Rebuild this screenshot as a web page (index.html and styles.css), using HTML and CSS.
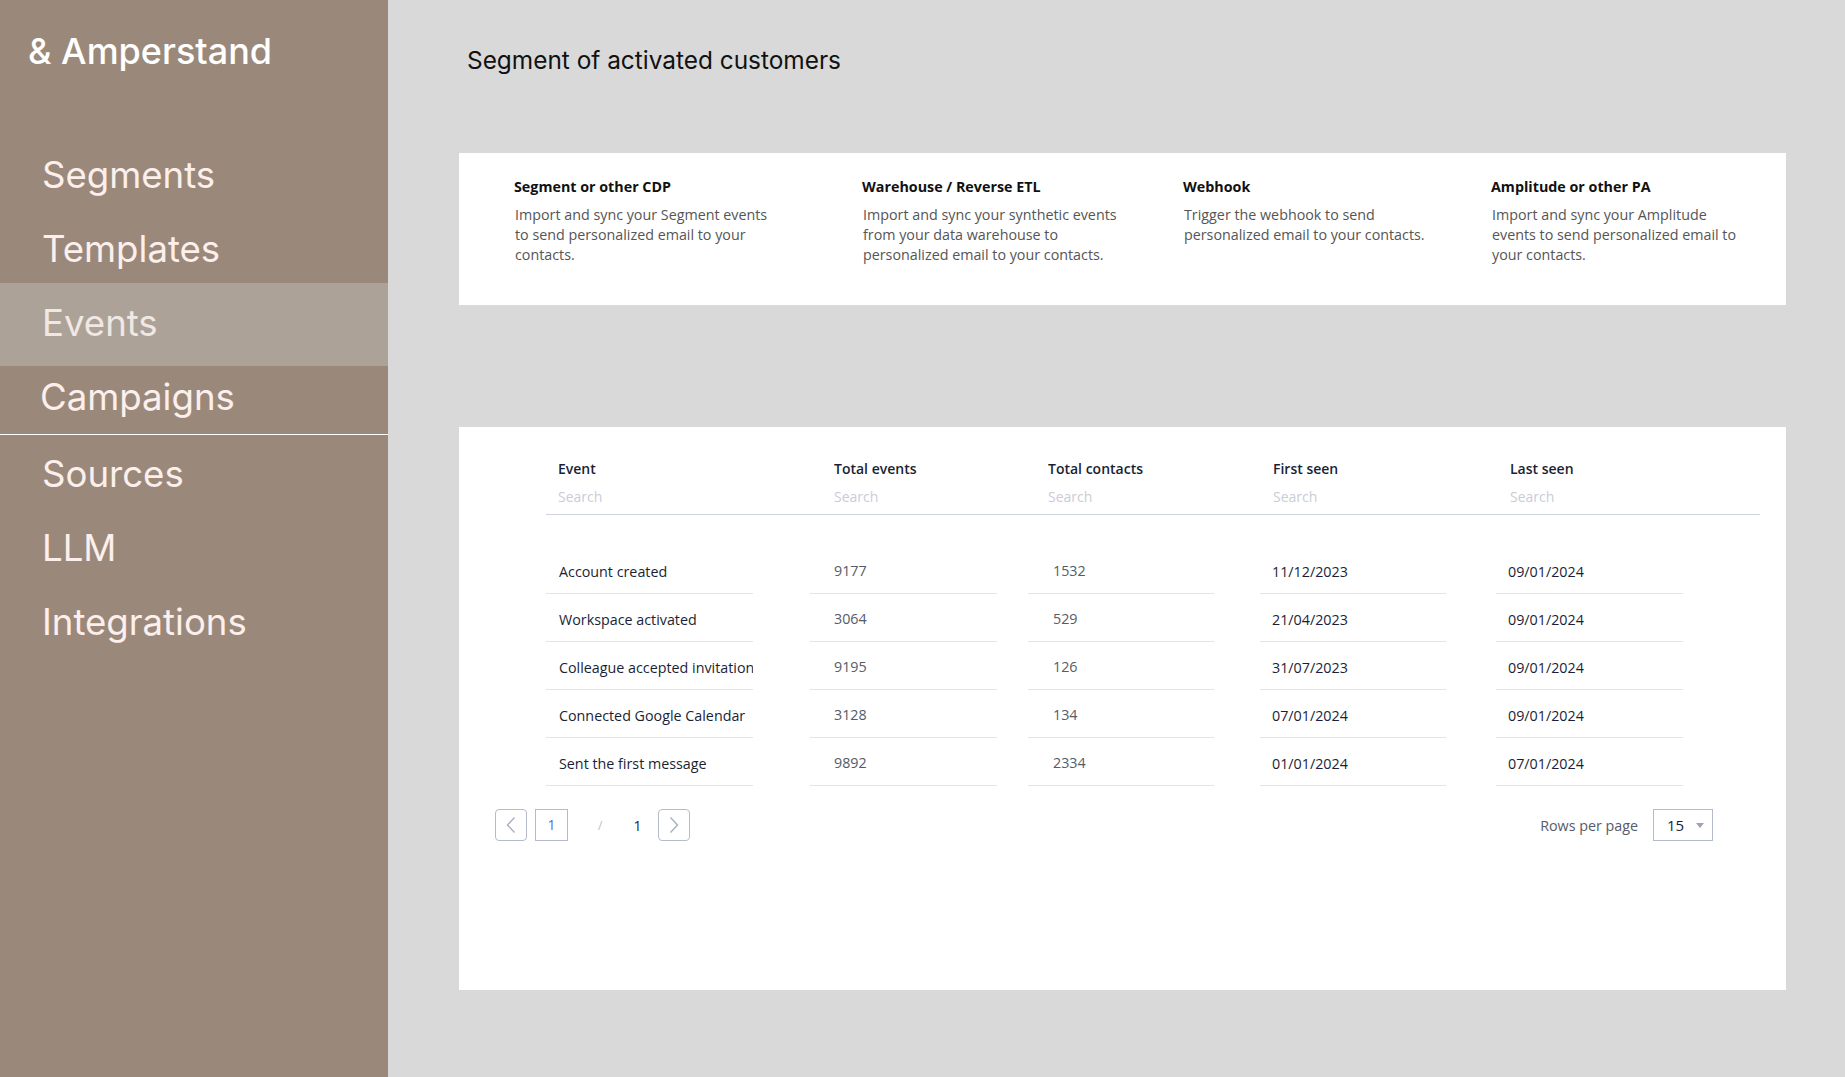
FILE: index.html
```html
<!DOCTYPE html>
<html lang="en">
<head>
  <meta charset="UTF-8">
  <meta name="viewport" content="width=device-width, initial-scale=1.0">
  <title>Events - Amperstand</title>
  <link rel="stylesheet" href="styles.css">
</head>
<body>
  <div class="app">
    <aside class="sidebar">
      <div class="logo">&amp; Amperstand</div>
      <nav class="nav">
        <a class="nav-item" href="#">Segments</a>
        <a class="nav-item" href="#">Templates</a>
        <a class="nav-item active" href="#">Events</a>
        <a class="nav-item divider" href="#">Campaigns</a>
        <a class="nav-item" href="#">Sources</a>
        <a class="nav-item" href="#">LLM</a>
        <a class="nav-item" href="#">Integrations</a>
      </nav>
    </aside>

    <main class="main">
      <h1 class="page-title">Segment of activated customers</h1>

      <section class="card sources">
        <div class="source s1">
          <h3>Segment or other CDP</h3>
          <p>Import and sync your Segment events to send personalized email to your contacts.</p>
        </div>
        <div class="source s2">
          <h3>Warehouse / Reverse ETL</h3>
          <p>Import and sync your synthetic events from your data warehouse to personalized email to your contacts.</p>
        </div>
        <div class="source s3">
          <h3>Webhook</h3>
          <p>Trigger the webhook to send personalized email to your contacts.</p>
        </div>
        <div class="source s4">
          <h3>Amplitude or other PA</h3>
          <p>Import and sync your Amplitude events to send personalized email to your contacts.</p>
        </div>
      </section>

      <section class="card events">
        <div class="table-head">
          <div class="th col-event"><span>Event</span><input placeholder="Search"></div>
          <div class="th col-total"><span>Total events</span><input placeholder="Search"></div>
          <div class="th col-contacts"><span>Total contacts</span><input placeholder="Search"></div>
          <div class="th col-first"><span>First seen</span><input placeholder="Search"></div>
          <div class="th col-last"><span>Last seen</span><input placeholder="Search"></div>
        </div>

        <div class="table-body" id="rows"></div>

        <div class="pager">
          <div class="pages">
            <button class="page-btn" aria-label="Previous">
              <svg width="12" height="18" viewBox="0 0 12 18"><path d="M9.5 1.5 L2.5 9 L9.5 16.5" fill="none" stroke="#a7afc0" stroke-width="1.4"/></svg>
            </button>
            <span class="page-current">1</span>
            <span class="page-sep">/</span>
            <span class="page-total">1</span>
            <button class="page-btn" aria-label="Next">
              <svg width="12" height="18" viewBox="0 0 12 18"><path d="M2.5 1.5 L9.5 9 L2.5 16.5" fill="none" stroke="#a7afc0" stroke-width="1.4"/></svg>
            </button>
          </div>
          <div class="per-page">
            <span>Rows per page</span>
            <div class="select">15 <svg width="8" height="5" viewBox="0 0 8 5"><path d="M0 0 L8 0 L4 5 Z" fill="#9ca3b3"/></svg></div>
          </div>
        </div>
      </section>
    </main>
  </div>

  <script>
    const events = [
      ['Account created', 9177, 1532, '11/12/2023', '09/01/2024'],
      ['Workspace activated', 3064, 529, '21/04/2023', '09/01/2024'],
      ['Colleague accepted invitation', 9195, 126, '31/07/2023', '09/01/2024'],
      ['Connected Google Calendar', 3128, 134, '07/01/2024', '09/01/2024'],
      ['Sent the first message', 9892, 2334, '01/01/2024', '07/01/2024']
    ];
    const cols = ['col-event', 'col-total', 'col-contacts', 'col-first', 'col-last'];
    const rows = document.getElementById('rows');

    events.forEach((ev) => {
      const row = document.createElement('div');
      row.className = 'row';
      ev.forEach((val, i) => {
        const cell = document.createElement('div');
        cell.className = 'td ' + cols[i];
        cell.textContent = val;
        row.appendChild(cell);
      });
      rows.appendChild(row);
    });
  </script>
</body>
</html>
```

FILE: styles.css
```css
body {
  margin: 0;
  background: #d9d9d9;
  font-family: "Open Sans", Arial, sans-serif;
}
.app {
  display: flex;
  min-height: 100vh;
}

/* sidebar */
.sidebar {
  width: 388px;
  flex-shrink: 0;
  background: #9a897b;
  font-family: Inter, "Noto Sans", sans-serif;
}
.logo {
  color: #fff;
  font-size: 36px;
  font-weight: 500;
  line-height: 44px;
  padding: 29px 0 0 28px;
}
.nav {
  display: flex;
  flex-direction: column;
  margin-top: 65px;
}
.nav-item {
  display: flex;
  align-items: center;
  height: 74px;
  padding-left: 42px;
  color: #fcefec;
  font-size: 36.6px;
  text-decoration: none;
}
.nav-item.active {
  box-sizing: border-box;
  height: 83px;
  margin-top: -3px;
  padding-bottom: 4px;
  background: #ada297;
  color: #efe8e5;
}
.nav-item.divider {
  box-sizing: border-box;
  height: 69px;
  padding-left: 40px;
  padding-bottom: 6px;
  border-bottom: 1px solid #fff;
}
.nav-item.divider + .nav-item {
  margin-top: 2px;
}

/* main */
.main {
  flex: 1;
  padding: 0 59px 0 71px;
}
.page-title {
  margin: 45px 0 78px 8px;
  font-family: Inter, "Noto Sans", sans-serif;
  font-size: 24.4px;
  font-weight: 400;
  line-height: 30px;
  color: #111;
}
.card {
  background: #fff;
}

/* source cards */
.sources {
  display: grid;
  grid-template-columns: 348px 321px 308px 1fr;
  height: 152px;
  box-sizing: border-box;
  padding: 24px 0 0 55px;
}
.source h3 {
  margin: 0 0 8px;
  font-size: 14.3px;
  font-weight: 700;
  line-height: 20px;
  color: #111;
}
.source p {
  margin: 0 0 0 1px;
  font-size: 14.3px;
  line-height: 20px;
  color: #555;
}
.s1 p { width: 256px; }
.s2 p { width: 264px; }
.s3 p { width: 246px; }
.s4 p { width: 246px; }

/* events table */
.events {
  margin-top: 122px;
  height: 563px;
  box-sizing: border-box;
  padding: 32px 26px 0 0;
}
.table-head {
  display: flex;
  margin-left: 87px;
  border-bottom: 1px solid #cfd3df;
  padding-bottom: 7px;
}
.th {
  display: flex;
  flex-direction: column;
  padding-left: 12px;
}
.th span {
  font-size: 14px;
  font-weight: 600;
  line-height: 20px;
  color: #1a1f36;
}
.th input {
  border: none;
  padding: 0;
  margin-top: 8px;
  width: 120px;
  font-family: inherit;
  font-size: 14px;
  line-height: 20px;
  outline: none;
}
.th input::placeholder {
  color: #c9cdd8;
}
.th.col-event { width: 264px; }
.th.col-total { width: 202px; }
.th.col-contacts { width: 213px; }
.th.col-first { width: 225px; }

.table-body {
  margin: 31px 0 0 87px;
}
.row {
  display: flex;
}
.td {
  box-sizing: border-box;
  height: 48px;
  padding-top: 15px;
  border-bottom: 1px solid #e1e4ea;
  font-size: 14.3px;
  line-height: 20px;
  white-space: nowrap;
  overflow: hidden;
}
.td.col-event {
  width: 207px;
  padding-left: 13px;
  color: #1a1f36;
  padding-top: 16px;
}
.td.col-total {
  width: 187px;
  margin-left: 57px;
  padding-left: 24px;
  color: #555b68;
}
.td.col-contacts {
  width: 186px;
  margin-left: 31px;
  padding-left: 25px;
  color: #555b68;
}
.td.col-first {
  width: 186px;
  margin-left: 46px;
  padding-left: 12px;
  color: #1a1f36;
  padding-top: 16px;
}
.td.col-last {
  width: 187px;
  margin-left: 50px;
  padding-left: 12px;
  color: #1a1f36;
  padding-top: 16px;
}

/* pagination */
.pager {
  display: flex;
  justify-content: space-between;
  align-items: center;
  margin-top: 23px;
  padding: 0 47px 0 36px;
}
.pages {
  display: flex;
  align-items: center;
}
.page-btn {
  display: flex;
  align-items: center;
  justify-content: center;
  width: 32px;
  height: 32px;
  padding: 0;
  background: #fff;
  border: 1px solid #b4bccb;
  border-radius: 4px;
}
.page-current {
  box-sizing: border-box;
  width: 33px;
  height: 32px;
  margin-left: 8px;
  border: 1px solid #b4bccb;
  text-align: center;
  line-height: 30px;
  font-size: 14px;
  color: #4b6bf5;
}
.page-sep {
  margin-left: 30px;
  font-size: 12px;
  color: #b9bec9;
}
.page-total {
  margin-left: 31px;
  font-size: 14px;
  color: #1a1f36;
}
.page-total + .page-btn {
  margin-left: 17px;
}
.per-page {
  display: flex;
  align-items: center;
  font-size: 14.3px;
  color: #555b68;
}
.select {
  display: flex;
  align-items: center;
  gap: 12px;
  box-sizing: border-box;
  width: 60px;
  height: 32px;
  margin-left: 15px;
  padding-left: 13px;
  border: 1px solid #b4bccb;
  font-size: 15px;
  color: #1a1f36;
}
```
